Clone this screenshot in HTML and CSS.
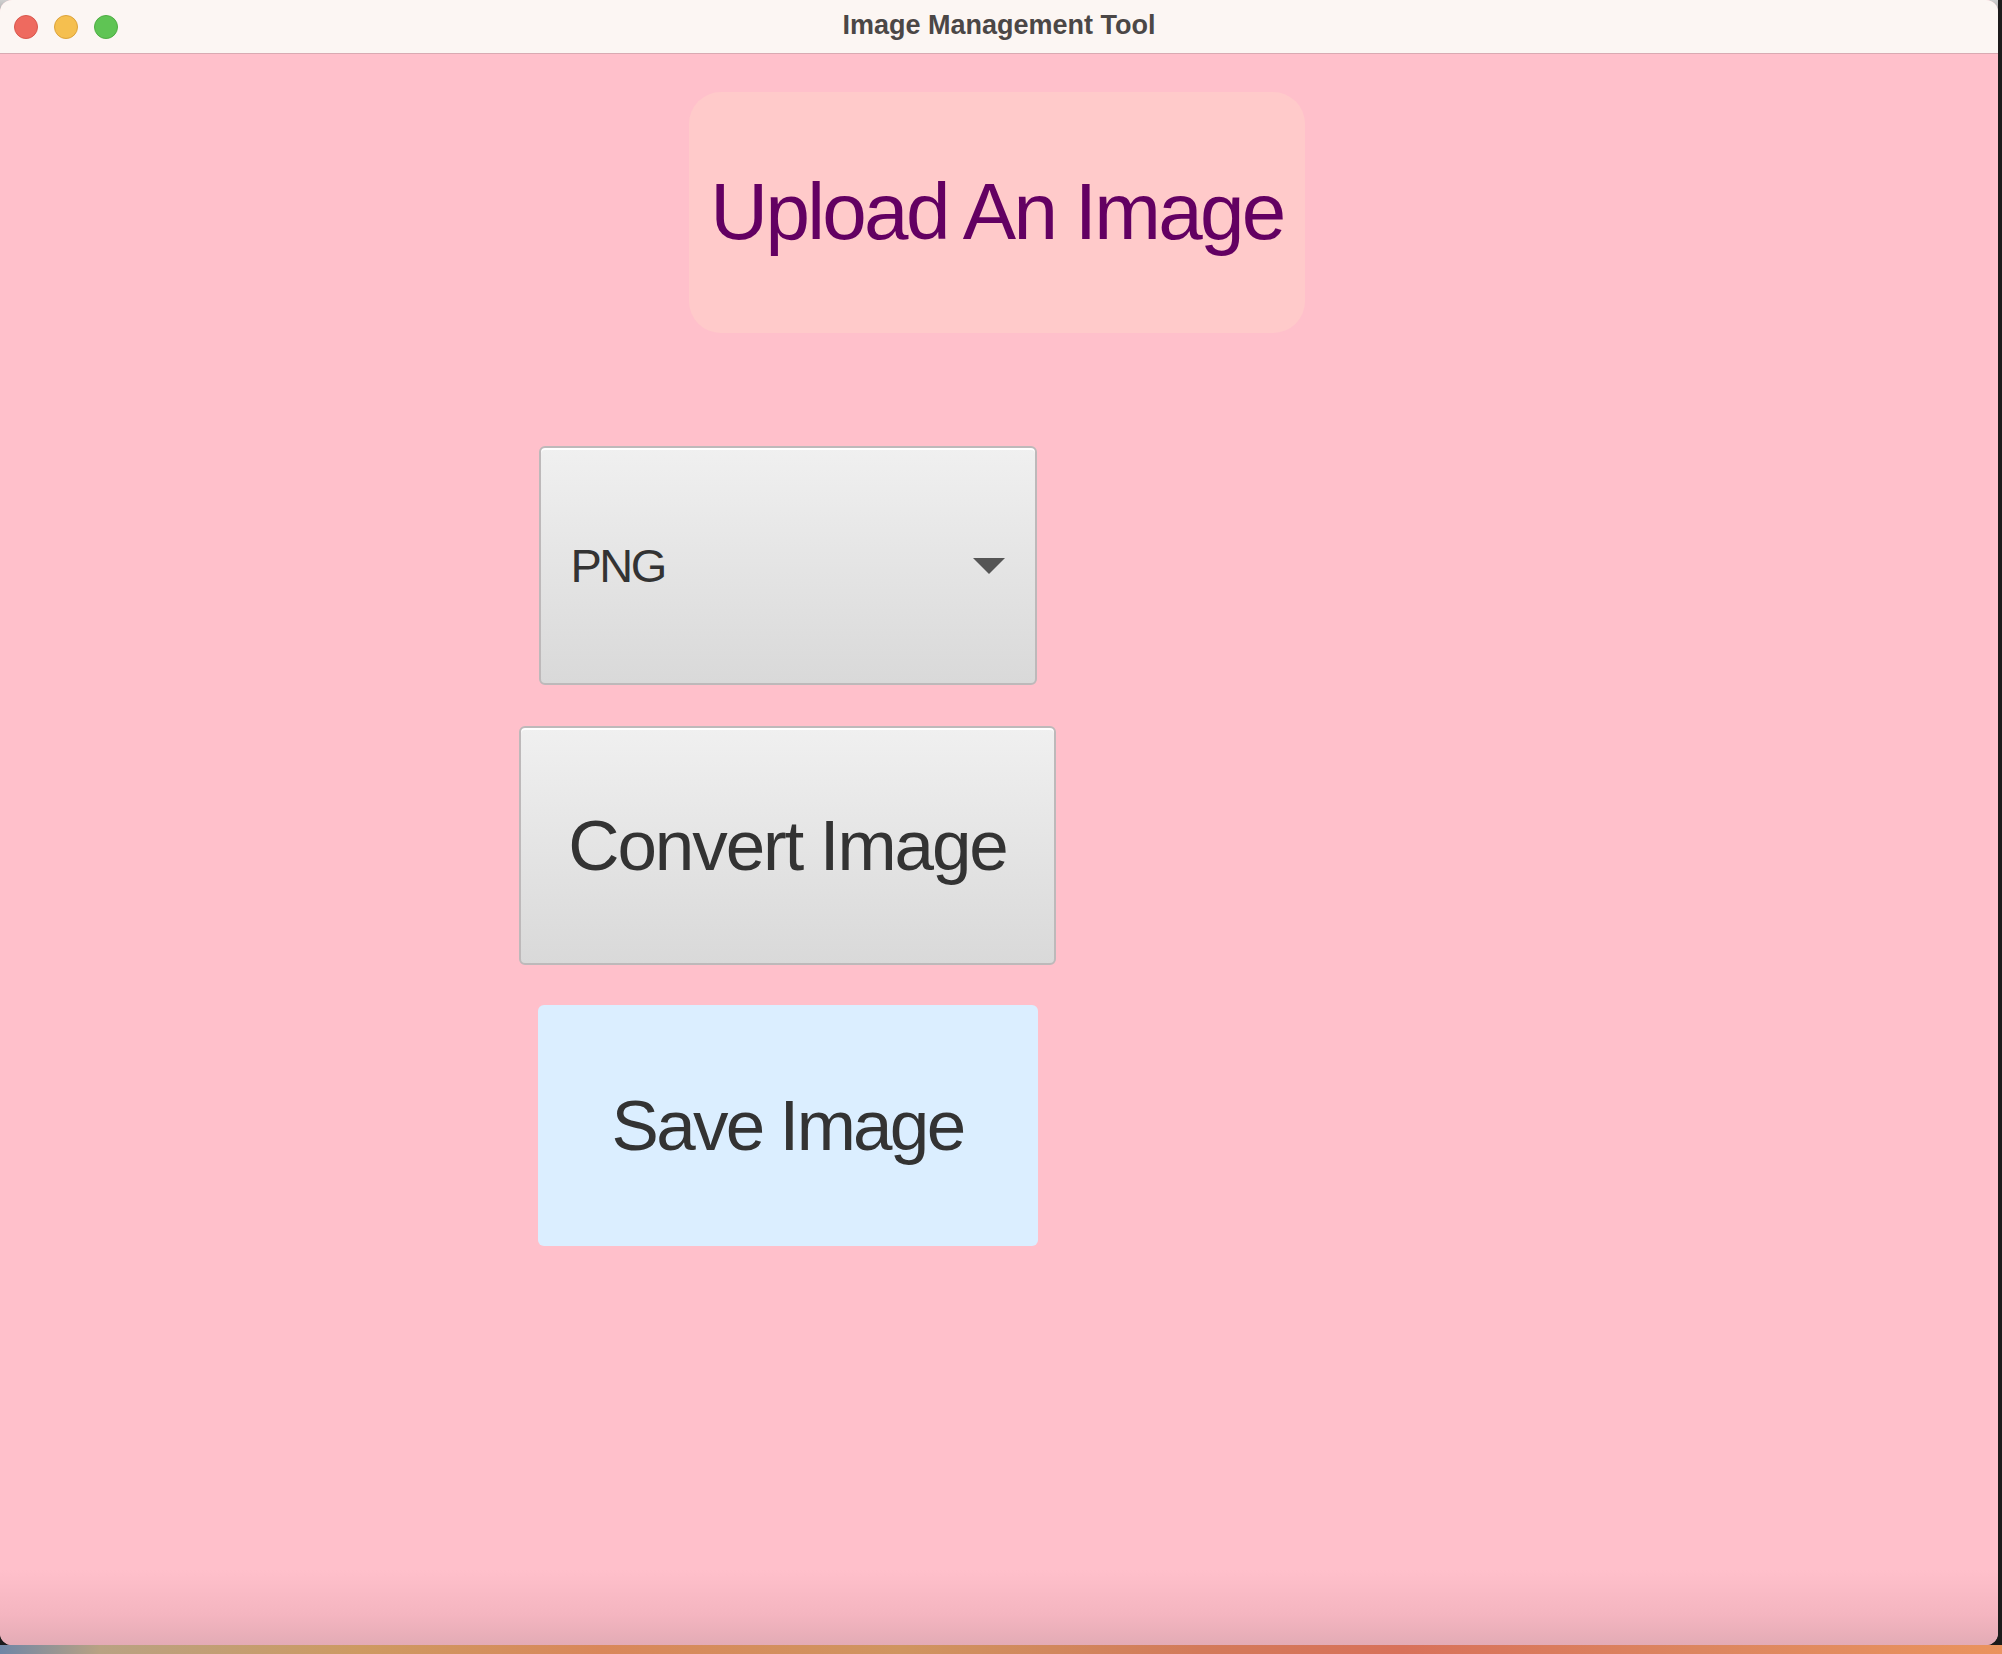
FILE: index.html
```html
<!DOCTYPE html>
<html lang="en">
<head>
<meta charset="utf-8">
<title>Image Management Tool</title>
<link rel="stylesheet" href="styles.css">
</head>
<body>
<div class="screen">
  <div class="desk-row">
    <div class="window">
      <header class="titlebar">
        <div class="lights">
          <span class="light red"></span>
          <span class="light yellow"></span>
          <span class="light green"></span>
        </div>
        <div class="title">Image Management Tool</div>
      </header>
      <main class="content">
        <div class="upload-row">
          <div class="upload">Upload An Image</div>
        </div>
        <div class="controls">
          <div class="select">
            <span class="select-value">PNG</span>
            <svg class="select-arrow" width="32" height="16" viewBox="0 0 32 16"><polygon points="0,0 32,0 16,16" fill="#555555"/></svg>
          </div>
          <button class="btn btn-convert">Convert Image</button>
          <button class="btn btn-save">Save Image</button>
        </div>
      </main>
    </div>
    <div class="desk-side"></div>
  </div>
  <div class="desk-strip"></div>
</div>
</body>
</html>
```

FILE: styles.css
```css
* { box-sizing: border-box; }
html, body { margin: 0; padding: 0; }
body {
  width: 2002px;
  height: 1654px;
  overflow: hidden;
  background: #1c1b1b;
  font-family: "Liberation Sans", Arial, sans-serif;
}
.screen {
  display: flex;
  flex-direction: column;
  width: 2002px;
  height: 1654px;
  background: linear-gradient(180deg, #cfcfcf 0, #2a2a2a 60px, #1c1b1b 100%);
}
.desk-row {
  display: flex;
  height: 1645px;
}
.window {
  width: 1998px;
  height: 1645px;
  border-radius: 12px;
  overflow: hidden;
  display: flex;
  flex-direction: column;
  background: #ffc0cb;
}
.desk-side {
  flex: 1;
  background: #1c1b1b;
}
.desk-strip {
  height: 9px;
  background: linear-gradient(90deg, #6f86a6 0, #b9a283 5%, #cd9a62 18%, #d9875a 30%, #cf9560 45%, #d37a5a 60%, #d8715a 70%, #dc8660 85%, #ea935e 100%);
}
.titlebar {
  height: 54px;
  flex: none;
  display: flex;
  align-items: center;
  position: relative;
  background: #fcf6f3;
  border-bottom: 1px solid #d9aab2;
}
.lights {
  display: flex;
  gap: 16px;
  padding-left: 14px;
}
.light {
  width: 24px;
  height: 24px;
  border-radius: 50%;
  display: block;
}
.red { background: #ee6a5f; border: 1px solid #d9574d; }
.yellow { background: #f5bf4f; border: 1px solid #dca33b; }
.green { background: #5fc454; border: 1px solid #4ead43; }
.title {
  position: absolute;
  left: 0;
  right: 0;
  top: 0;
  height: 53px;
  display: flex;
  align-items: center;
  justify-content: center;
  font-weight: bold;
  font-size: 27px;
  color: #4b4746;
  padding-left: 0;
  padding-bottom: 2px;
}
.content {
  flex: 1;
  display: flex;
  flex-direction: column;
  background: linear-gradient(180deg, #ffc0cb 0, #ffc0cb calc(100% - 75px), #f4b5c0 calc(100% - 30px), #e3abb5 100%);
}
.upload-row {
  display: flex;
  justify-content: center;
  padding-top: 38px;
  padding-right: 4px;
}
.upload {
  width: 616px;
  height: 241px;
  border-radius: 32px;
  background: #ffcaca;
  color: #630062;
  font-size: 80px;
  letter-spacing: -2.7px;
  display: flex;
  align-items: center;
  justify-content: center;
  padding-bottom: 2px;
}
.controls {
  display: flex;
  flex-direction: column;
  align-items: center;
  width: 537px;
  margin-left: 519px;
  margin-top: 113px;
  gap: 41px;
}
.select {
  width: 498px;
  height: 239px;
  border: 2px solid #bdb9ba;
  border-radius: 6px;
  background: linear-gradient(180deg, #f0f0f0, #d9d9d9);
  box-shadow: inset 0 2px 0 #ffffff;
  display: flex;
  align-items: center;
  justify-content: space-between;
  padding: 0 30px 0 30px;
}
.select-value {
  font-size: 47px;
  letter-spacing: -2.5px;
  color: #333333;
}
.select-arrow { display: block; margin-top: 1px; }
.btn {
  font-family: "Liberation Sans", Arial, sans-serif;
  font-size: 71px;
  color: #333333;
  margin: 0;
  cursor: default;
}
.btn-convert {
  width: 537px;
  height: 239px;
  border: 2px solid #bdb9ba;
  border-radius: 6px;
  background: linear-gradient(180deg, #f0f0f0, #d9d9d9);
  box-shadow: inset 0 2px 0 #ffffff;
  letter-spacing: -2.1px;
}
.btn-save {
  width: 500px;
  height: 241px;
  border: none;
  border-radius: 6px;
  background: #dbeeff;
  margin-top: -1px;
  letter-spacing: -2.7px;
}
```
